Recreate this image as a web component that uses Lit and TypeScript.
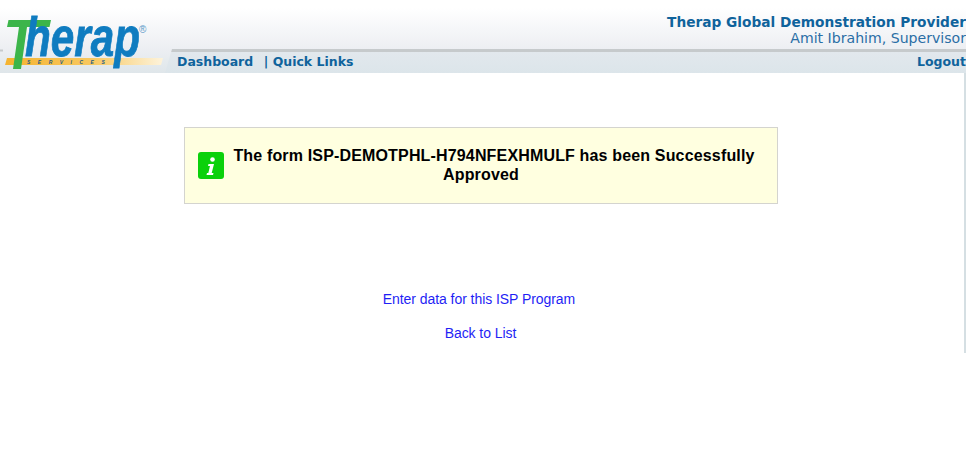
import { LitElement, html, css } from "lit";
import { customElement } from "lit/decorators.js";

@customElement("app-root")
export class AppRoot extends LitElement {
  static styles = css`
    :host { display: block; width: 966px; height: 450px; overflow: hidden; background: #fff; font-family: "Liberation Sans", Arial, sans-serif; }
    .header { display: flex; height: 73px; background: linear-gradient(#fff 8px, #eceef2 50px, #e6ebee 60px, #dfe6ea 73px); }
    .logo { width: 165px; flex: none; display: block; overflow: visible; }
    .right { flex: 1; display: flex; flex-direction: column; min-width: 0; }
    .who { height: 49px; box-sizing: border-box; padding-top: 14px; text-align: right; font-family: "DejaVu Sans", Verdana, sans-serif; color: #0f639c; }
    .org { font-size: 13.72px; font-weight: 700; line-height: 16px; }
    .user { font-size: 14.1px; line-height: 16px; color: #2a6ea5; }
    .nav { flex: 1; display: flex; align-items: center; justify-content: space-between; padding: 0 0 3px 12px; border-top: 3px solid #c6cacc; background: linear-gradient(#e2e8ed, #dce5ea); clip-path: polygon(7px 0, 100% 0, 100% 100%, 0 100%); font-family: "DejaVu Sans", Verdana, sans-serif; font-weight: 700; font-size: 12.5px; color: #0f639c; }
    .links { display: flex; gap: 10.5px; }
    .body { position: relative; height: 280px; border-right: 2px solid #d5dfe3; display: flex; flex-direction: column; align-items: center; }
    .msg { margin-top: 54px; margin-left: -2px; width: 594px; height: 77px; box-sizing: border-box; border: 1px solid #d4d4cf; background: #ffffe0; display: flex; align-items: center; padding: 0 21px 0 13px; gap: 8px; }
    .ok { flex: none; }
    .text { flex: 1; text-align: center; font-weight: 700; font-size: 16px; letter-spacing: 0.16px; line-height: 19px; color: #000; margin-top: -2px; }
    .line { display: block; }
    .line.last { padding-right: 26px; }
    .actions { margin-top: 87px; margin-left: -6px; display: flex; flex-direction: column; align-items: center; gap: 18px; font-size: 14px; line-height: 16px; }
    .actions a { letter-spacing: -0.06px; }
    .actions a.back { margin-left: 3px; }
    a { color: #1f1ff5; text-decoration: none; }
  `;

  render() {
    return html`
      <div class="header">
        <svg class="logo" width="165" height="73" viewBox="0 0 165 73">
          <defs>
            <linearGradient id="bar" x1="0" x2="1" y1="0" y2="0">
              <stop offset="0" stop-color="#f5b32f" />
              <stop offset="0.55" stop-color="#f8c860" />
              <stop offset="1" stop-color="#fdf3dc" />
            </linearGradient>
          </defs>
          <rect x="0" y="49.500" width="3" height="2" fill="#c6cacc" />
          <path d="M7 58H163L161 65H5Z" fill="url(#bar)" />
          <path d="M8.500 20H51L49.500 27H27L21 69H13L19 27H7Z" fill="#3cb54a" />
          <text x="25" y="56" font-family="Liberation Sans" font-size="56" font-weight="700" font-style="italic" textLength="115" lengthAdjust="spacingAndGlyphs" fill="#0f7cc0" stroke="#0f7cc0" stroke-width="0.8">herap</text>
          <text x="27" y="64" font-family="Liberation Sans" font-size="5" font-weight="700" font-style="italic" letter-spacing="7.500" fill="#1d5d86">SERVICES</text>
          <text x="139" y="33" font-family="Liberation Sans" font-size="10" fill="#5b9bc8">®</text>
        </svg>
        <div class="right">
          <div class="who">
            <div class="org">Therap Global Demonstration Provider</div>
            <div class="user">Amit Ibrahim, Supervisor</div>
          </div>
          <div class="nav">
            <div class="links"><span>Dashboard</span><span>| Quick Links</span></div>
            <span>Logout</span>
          </div>
        </div>
      </div>
      <div class="body">
        <div class="msg">
          <svg class="ok" width="26" height="27" viewBox="0 0 26 27">
            <rect width="26" height="27" rx="3" fill="#0bd10b" />
            <circle cx="14.500" cy="7.500" r="2.300" fill="#fff" />
            <path d="M10.500 12H16L13.700 21H15.500L15 23H8.500L9 21H10.300L12 14H10Z" fill="#fff" />
          </svg>
          <div class="text"><span class="line">The form ISP-DEMOTPHL-H794NFEXHMULF has been Successfully</span> <span class="line last">Approved</span></div>
        </div>
        <div class="actions">
          <a href="#">Enter data for this ISP Program</a>
          <a class="back" href="#">Back to List</a>
        </div>
      </div>
    `;
  }
}
